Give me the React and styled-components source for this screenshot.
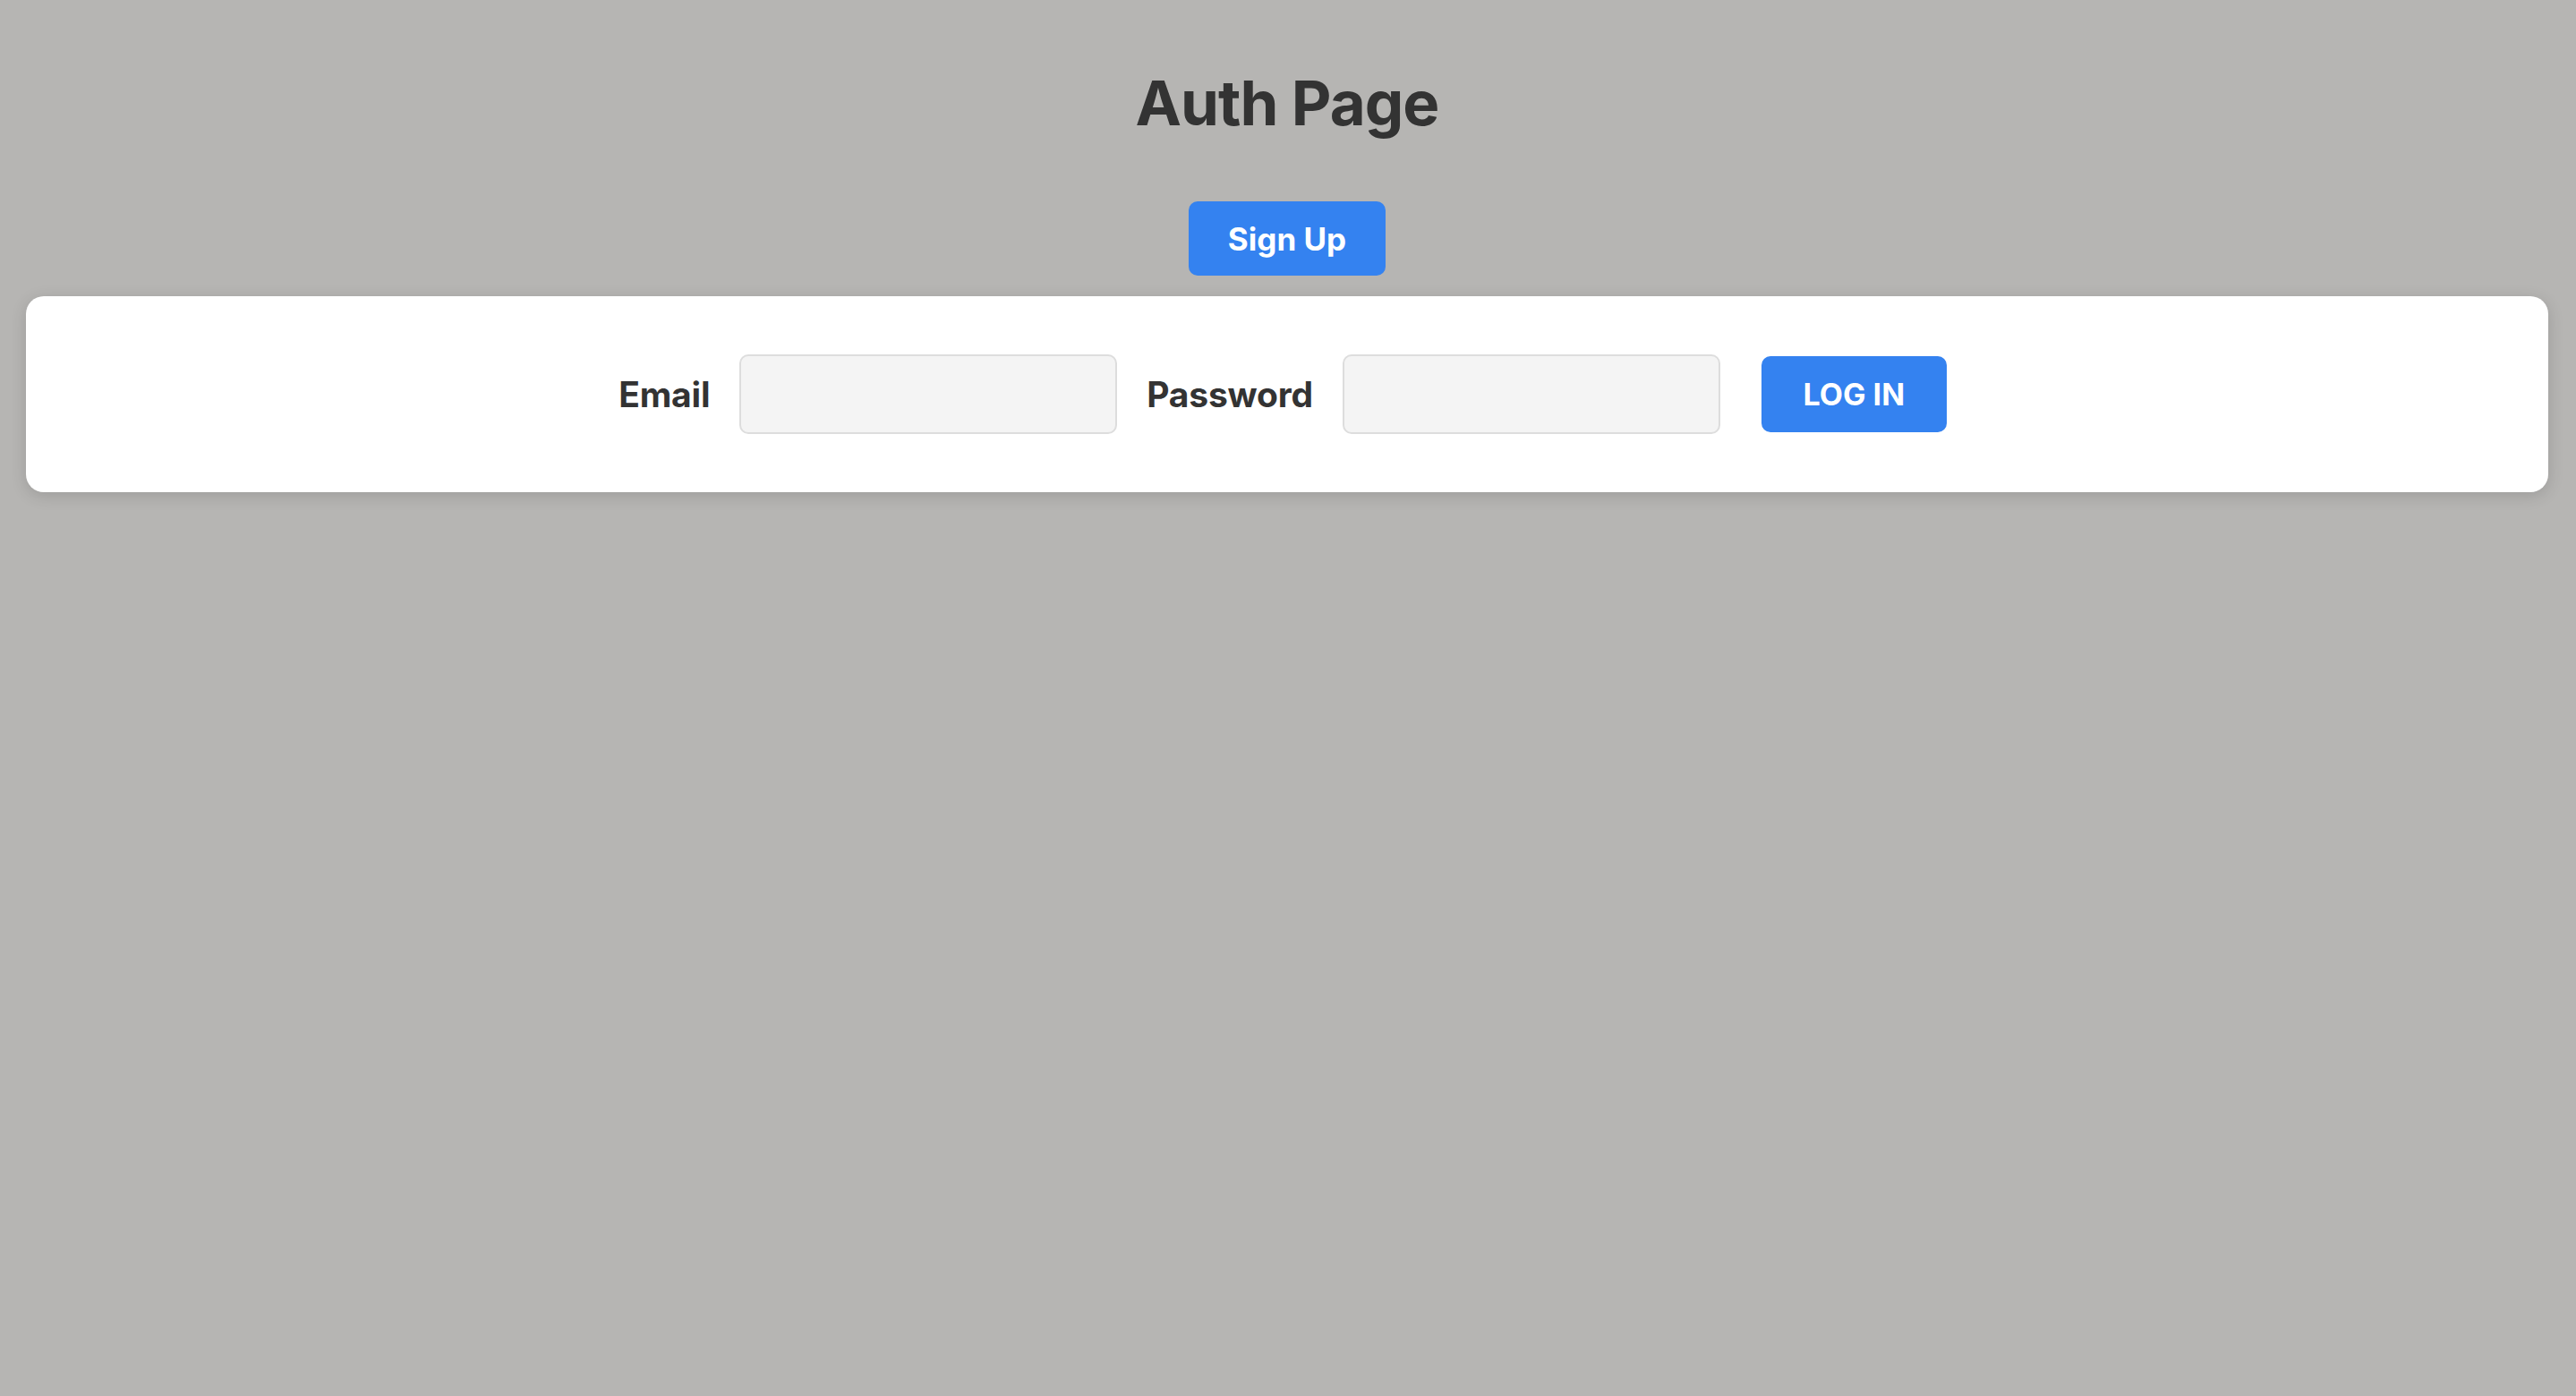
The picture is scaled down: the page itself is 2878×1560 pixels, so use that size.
import React, { useState } from 'react'
import styled, { createGlobalStyle } from 'styled-components'

const GlobalStyle = createGlobalStyle`
  html, body {
    margin: 0;
    padding: 0;
    background: #b6b5b3;
    font-family: Inter, "Noto Sans", "Liberation Sans", sans-serif;
    color: #333333;
  }
  * { box-sizing: border-box; }
`

const App = () => {
  const [email, setEmail] = useState('')
  const [password, setPassword] = useState('')

  return (
    <>
      <GlobalStyle />
      <Page>
        <Title>Auth Page</Title>
        <SignUpButton>Sign Up</SignUpButton>
        <Card>
          <Form onSubmit={(e) => e.preventDefault()}>
            <Label htmlFor="email">Email</Label>
            <Input id="email" type="email" value={email} onChange={(e) => setEmail(e.target.value)} />
            <Label htmlFor="password">Password</Label>
            <Input id="password" type="password" value={password} onChange={(e) => setPassword(e.target.value)} />
            <LoginButton type="submit">Log in</LoginButton>
          </Form>
        </Card>
      </Page>
    </>
  )
}

export default App

const Page = styled.div`
  min-height: 1560px;
  display: flex;
  flex-direction: column;
  align-items: center;
  padding: 73px 31px 0 29px;
`

const Title = styled.h1`
  margin: 0;
  font-size: 69px;
  font-weight: 700;
  line-height: 84px;
  color: #333333;
  letter-spacing: -1px;
`

const BlueButton = styled.button`
  border: none;
  background: #3482f0;
  color: #ffffff;
  font-family: inherit;
  font-weight: 700;
  border-radius: 10px;
  cursor: pointer;
  display: flex;
  align-items: center;
  justify-content: center;
`

const SignUpButton = styled(BlueButton)`
  margin-top: 68px;
  width: 220px;
  height: 83px;
  font-size: 35px;
`

const Card = styled.div`
  margin-top: 23px;
  width: 100%;
  height: 219px;
  background: #ffffff;
  border-radius: 20px;
  box-shadow: 0 4px 18px rgba(0, 0, 0, 0.14);
  display: flex;
  align-items: center;
  justify-content: center;
`

const Form = styled.form`
  display: flex;
  align-items: center;
  margin-right: 10px;
`

const Label = styled.label`
  font-size: 39px;
  font-weight: 700;
  color: #333333;
  margin-right: 33px;
  letter-spacing: -0.2px;
`

const Input = styled.input`
  width: 422px;
  height: 89px;
  background: #f4f4f4;
  border: 2px solid #dddddd;
  border-radius: 10px;
  font-family: inherit;
  font-size: 32px;
  padding: 0 18px;
  outline: none;
  margin-right: 33px;

  &:last-of-type {
    margin-right: 46px;
  }
`

const LoginButton = styled(BlueButton)`
  width: 207px;
  height: 85px;
  font-size: 34px;
  text-transform: uppercase;
`
